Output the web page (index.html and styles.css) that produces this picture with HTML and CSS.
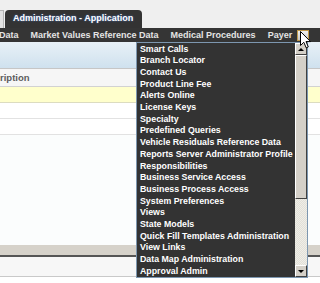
FILE: index.html
```html
<!DOCTYPE html>
<html lang="en">
<head>
    <meta charset="UTF-8">
    <meta name="viewport" content="width=device-width, initial-scale=1.0">
    <title>Administration - Application</title>
    <link rel="stylesheet" href="styles.css">
</head>
<body>
    <div class="tabs">
        <div class="tab-side"></div>
        <div class="tab">Administration - Application</div>
    </div>

    <div class="menubar">
        <span class="menu-item first">Data</span>
        <span class="menu-item">Market Values Reference Data</span>
        <span class="menu-item">Medical Procedures</span>
        <span class="menu-item">Payer</span>
        <span class="more-btn"></span>
    </div>

    <div class="grid">
        <div class="grid-head"></div>
        <div class="col-head">ription</div>
        <div class="row selected"></div>
        <div class="row"></div>
        <div class="row"></div>
        <div class="grid-body"></div>
        <div class="band"></div>
        <div class="foot"></div>
    </div>

    <div class="dropdown">
        <ul class="drop-list">
            <li>Smart Calls</li>
            <li>Branch Locator</li>
            <li>Contact Us</li>
            <li>Product Line Fee</li>
            <li>Alerts Online</li>
            <li>License Keys</li>
            <li>Specialty</li>
            <li>Predefined Queries</li>
            <li>Vehicle Residuals Reference Data</li>
            <li>Reports Server Administrator Profile</li>
            <li>Responsibilities</li>
            <li>Business Service Access</li>
            <li>Business Process Access</li>
            <li>System Preferences</li>
            <li>Views</li>
            <li>State Models</li>
            <li>Quick Fill Templates Administration</li>
            <li>View Links</li>
            <li>Data Map Administration</li>
            <li>Approval Admin</li>
        </ul>
        <div class="scrollbar">
            <div class="sb-btn"><span class="arrow-up"></span></div>
            <div class="sb-track">
                <div class="sb-thumb"></div>
            </div>
            <div class="sb-btn"><span class="arrow-down"></span></div>
        </div>
    </div>

    <svg class="cursor" width="12" height="18" viewBox="0 0 12 18">
        <path d="M0.5 0.5 L0.5 14.5 L3.8 11.3 L6.2 16.8 L8.3 15.9 L6 10.6 L10.5 10.6 Z" fill="#fff" stroke="#000" stroke-width="1"/>
    </svg>
</body>
</html>
```

FILE: styles.css
```css
body {
    margin: 0;
    background: #fff;
    font-family: "Liberation Sans", Arial, sans-serif;
    font-size: 9px;
    font-weight: bold;
    overflow: hidden;
}
.tabs {
    display: flex;
    align-items: flex-end;
    height: 28px;
    background: #efefef;
}
.tab-side {
    width: 3px;
    height: 17px;
    background: #e2e2e2;
    border: 1px solid #b5b5b5;
    border-left: none;
    border-bottom: none;
}
.tab {
    margin-left: 1px;
    height: 18px;
    line-height: 17px;
    padding: 0 8px 0 8px;
    width: 121px;
    background: #333;
    color: #fff;
    border-radius: 4px 4px 0 0;
    text-shadow: 0 0 2px #4a7bd0;
}
.menubar {
    display: flex;
    align-items: center;
    height: 14px;
    background: #353535;
    color: #e4e4e4;
}
.menu-item {
    margin-right: 12px;
    white-space: nowrap;
}
.menu-item.first {
    margin-left: -1px;
}
.more-btn {
    margin-left: -7px;
    width: 10px;
    height: 9px;
    border: 1px solid #c09a4c;
    background: linear-gradient(#f0f0f0, #c8c8c8);
}
.grid-head {
    height: 26px;
    background: linear-gradient(#e8f1f7, #cfe1ee);
    border-bottom: 1px solid #c6c6c6;
}
.col-head {
    height: 17px;
    line-height: 17px;
    background: #f6f6f6;
    color: #5c5c5c;
    font-size: 9.5px;
    border-bottom: 1px solid #d2d2d2;
}
.row {
    height: 15px;
    border-bottom: 1px solid #e2e2e2;
}
.row.selected {
    background: #ffffcc;
    border-bottom-color: #dcdcc0;
}
.grid-body {
    height: 110px;
    background: #fbfdfd;
}
.band {
    height: 10px;
    background: #d6d2ca;
    border-bottom: 2px solid #555;
}
.foot {
    height: 19px;
    background: #f7f7f7;
    border-bottom: 1px solid #c9c9c9;
}
.dropdown {
    position: absolute;
    left: 136px;
    top: 42px;
    width: 170px;
    height: 234px;
    display: flex;
    background: #333;
    border: 1px solid #7d97b0;
}
.drop-list {
    flex: 1;
    list-style: none;
    margin: 0;
    padding: 0.5px 0 0 3px;
    color: #fff;
    font-size: 8.8px;
    line-height: 11.7px;
    white-space: nowrap;
    overflow: hidden;
}
.scrollbar {
    width: 12px;
    display: flex;
    flex-direction: column;
    background: #ebeae3;
}
.sb-btn {
    height: 10px;
    display: flex;
    align-items: center;
    justify-content: center;
    background: #d4d0c8;
    border: 1px solid;
    border-color: #fff #404040 #404040 #fff;
}
.sb-track {
    flex: 1;
    background-color: #efeee8;
    background-image: linear-gradient(45deg, #e2e0d8 25%, transparent 25%, transparent 75%, #e2e0d8 75%),
        linear-gradient(45deg, #e2e0d8 25%, transparent 25%, transparent 75%, #e2e0d8 75%);
    background-size: 2px 2px;
    background-position: 0 0, 1px 1px;
}
.sb-thumb {
    height: 144px;
    background: #d4d0c8;
    border: 1px solid;
    border-color: #fff #404040 #404040 #fff;
    box-sizing: border-box;
}
.arrow-up {
    border-left: 3px solid transparent;
    border-right: 3px solid transparent;
    border-bottom: 3px solid #000;
}
.arrow-down {
    border-left: 3px solid transparent;
    border-right: 3px solid transparent;
    border-top: 3px solid #000;
}
.cursor {
    position: absolute;
    left: 300px;
    top: 31px;
}
```
